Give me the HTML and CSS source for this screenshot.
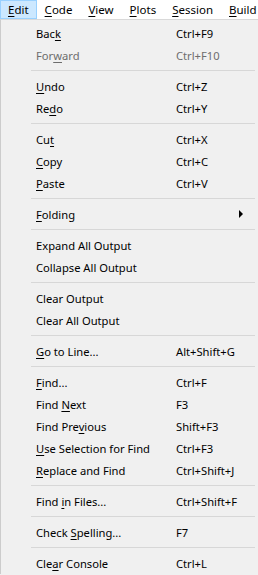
FILE: index.html
```html
<!DOCTYPE html>
<html lang="en">
<head>
    <meta charset="UTF-8">
    <meta name="viewport" content="width=device-width, initial-scale=1.0">
    <title>Edit menu</title>
    <link rel="stylesheet" href="styles.css">
</head>
<body>
    <div class="menubar">
        <span class="top active"><u>E</u>dit</span>
        <span class="top"><u>C</u>ode</span>
        <span class="top"><u>V</u>iew</span>
        <span class="top"><u>P</u>lots</span>
        <span class="top"><u>S</u>ession</span>
        <span class="top"><u>B</u>uild</span>
    </div>
    <div class="dropdown">
        <div class="item"><span class="label">Bac<u>k</u></span><span class="key">Ctrl+F9</span></div>
        <div class="item disabled"><span class="label">For<u>w</u>ard</span><span class="key">Ctrl+F10</span></div>
        <div class="sep"></div>
        <div class="item"><span class="label"><u>U</u>ndo</span><span class="key">Ctrl+Z</span></div>
        <div class="item"><span class="label">Re<u>d</u>o</span><span class="key">Ctrl+Y</span></div>
        <div class="sep"></div>
        <div class="item"><span class="label">Cu<u>t</u></span><span class="key">Ctrl+X</span></div>
        <div class="item"><span class="label"><u>C</u>opy</span><span class="key">Ctrl+C</span></div>
        <div class="item"><span class="label"><u>P</u>aste</span><span class="key">Ctrl+V</span></div>
        <div class="sep"></div>
        <div class="item"><span class="label"><u>F</u>olding</span><span class="key"></span><span class="arrow"></span></div>
        <div class="sep"></div>
        <div class="item"><span class="label">Expand All Output</span><span class="key"></span></div>
        <div class="item"><span class="label">Collapse All Output</span><span class="key"></span></div>
        <div class="sep"></div>
        <div class="item"><span class="label">Clear Output</span><span class="key"></span></div>
        <div class="item"><span class="label">Clear All Output</span><span class="key"></span></div>
        <div class="sep"></div>
        <div class="item"><span class="label"><u>G</u>o to Line...</span><span class="key">Alt+Shift+G</span></div>
        <div class="sep"></div>
        <div class="item"><span class="label"><u>F</u>ind...</span><span class="key">Ctrl+F</span></div>
        <div class="item"><span class="label">Find <u>N</u>ext</span><span class="key">F3</span></div>
        <div class="item"><span class="label">Find Pre<u>v</u>ious</span><span class="key">Shift+F3</span></div>
        <div class="item"><span class="label"><u>U</u>se Selection for Find</span><span class="key">Ctrl+F3</span></div>
        <div class="item"><span class="label"><u>R</u>eplace and Find</span><span class="key">Ctrl+Shift+J</span></div>
        <div class="sep"></div>
        <div class="item"><span class="label">Find <u>i</u>n Files...</span><span class="key">Ctrl+Shift+F</span></div>
        <div class="sep"></div>
        <div class="item"><span class="label">Check <u>S</u>pelling...</span><span class="key">F7</span></div>
        <div class="sep"></div>
        <div class="item"><span class="label">Cle<u>a</u>r Console</span><span class="key">Ctrl+L</span></div>
    </div>
</body>
</html>
```

FILE: styles.css
```css
body {
    margin: 0;
    font-family: "Noto Sans", "Open Sans", sans-serif;
    font-size: 11.2px;
    color: #000;
    background: #f0f0f0;
    overflow: hidden;
}
u {
    text-decoration-thickness: 1px;
    text-underline-offset: 2px;
}
.menubar {
    display: flex;
    height: 19px;
    background: #fff;
    white-space: nowrap;
    font-size: 11.5px;
    overflow: hidden;
}
.top {
    display: flex;
    align-items: center;
    padding: 0 8px;
    line-height: 19px;
}
.top:last-child {
    padding-right: 0;
}
.top.active {
    background: #cce8ff;
    box-shadow: inset 0 0 0 1px #99d1ff;
}
.dropdown {
    border-top: 1px solid #d9d9d9;
    border-left: 1px solid #cccccc;
    padding: 2px 3px 0 30px;
}
.item {
    display: flex;
    align-items: center;
    height: 22px;
    white-space: nowrap;
}
.label {
    width: 140px;
    padding-left: 5px;
}
.key {
    flex: 1;
}
.item.disabled {
    color: #6d6d6d;
}
.arrow {
    width: 0;
    height: 0;
    border-top: 4px solid transparent;
    border-bottom: 4px solid transparent;
    border-left: 4px solid #000;
    margin-right: 12px;
}
.sep {
    height: 9px;
    display: flex;
    align-items: center;
}
.sep::before {
    content: "";
    flex: 1;
    height: 1px;
    background: #d7d7d7;
}
```
